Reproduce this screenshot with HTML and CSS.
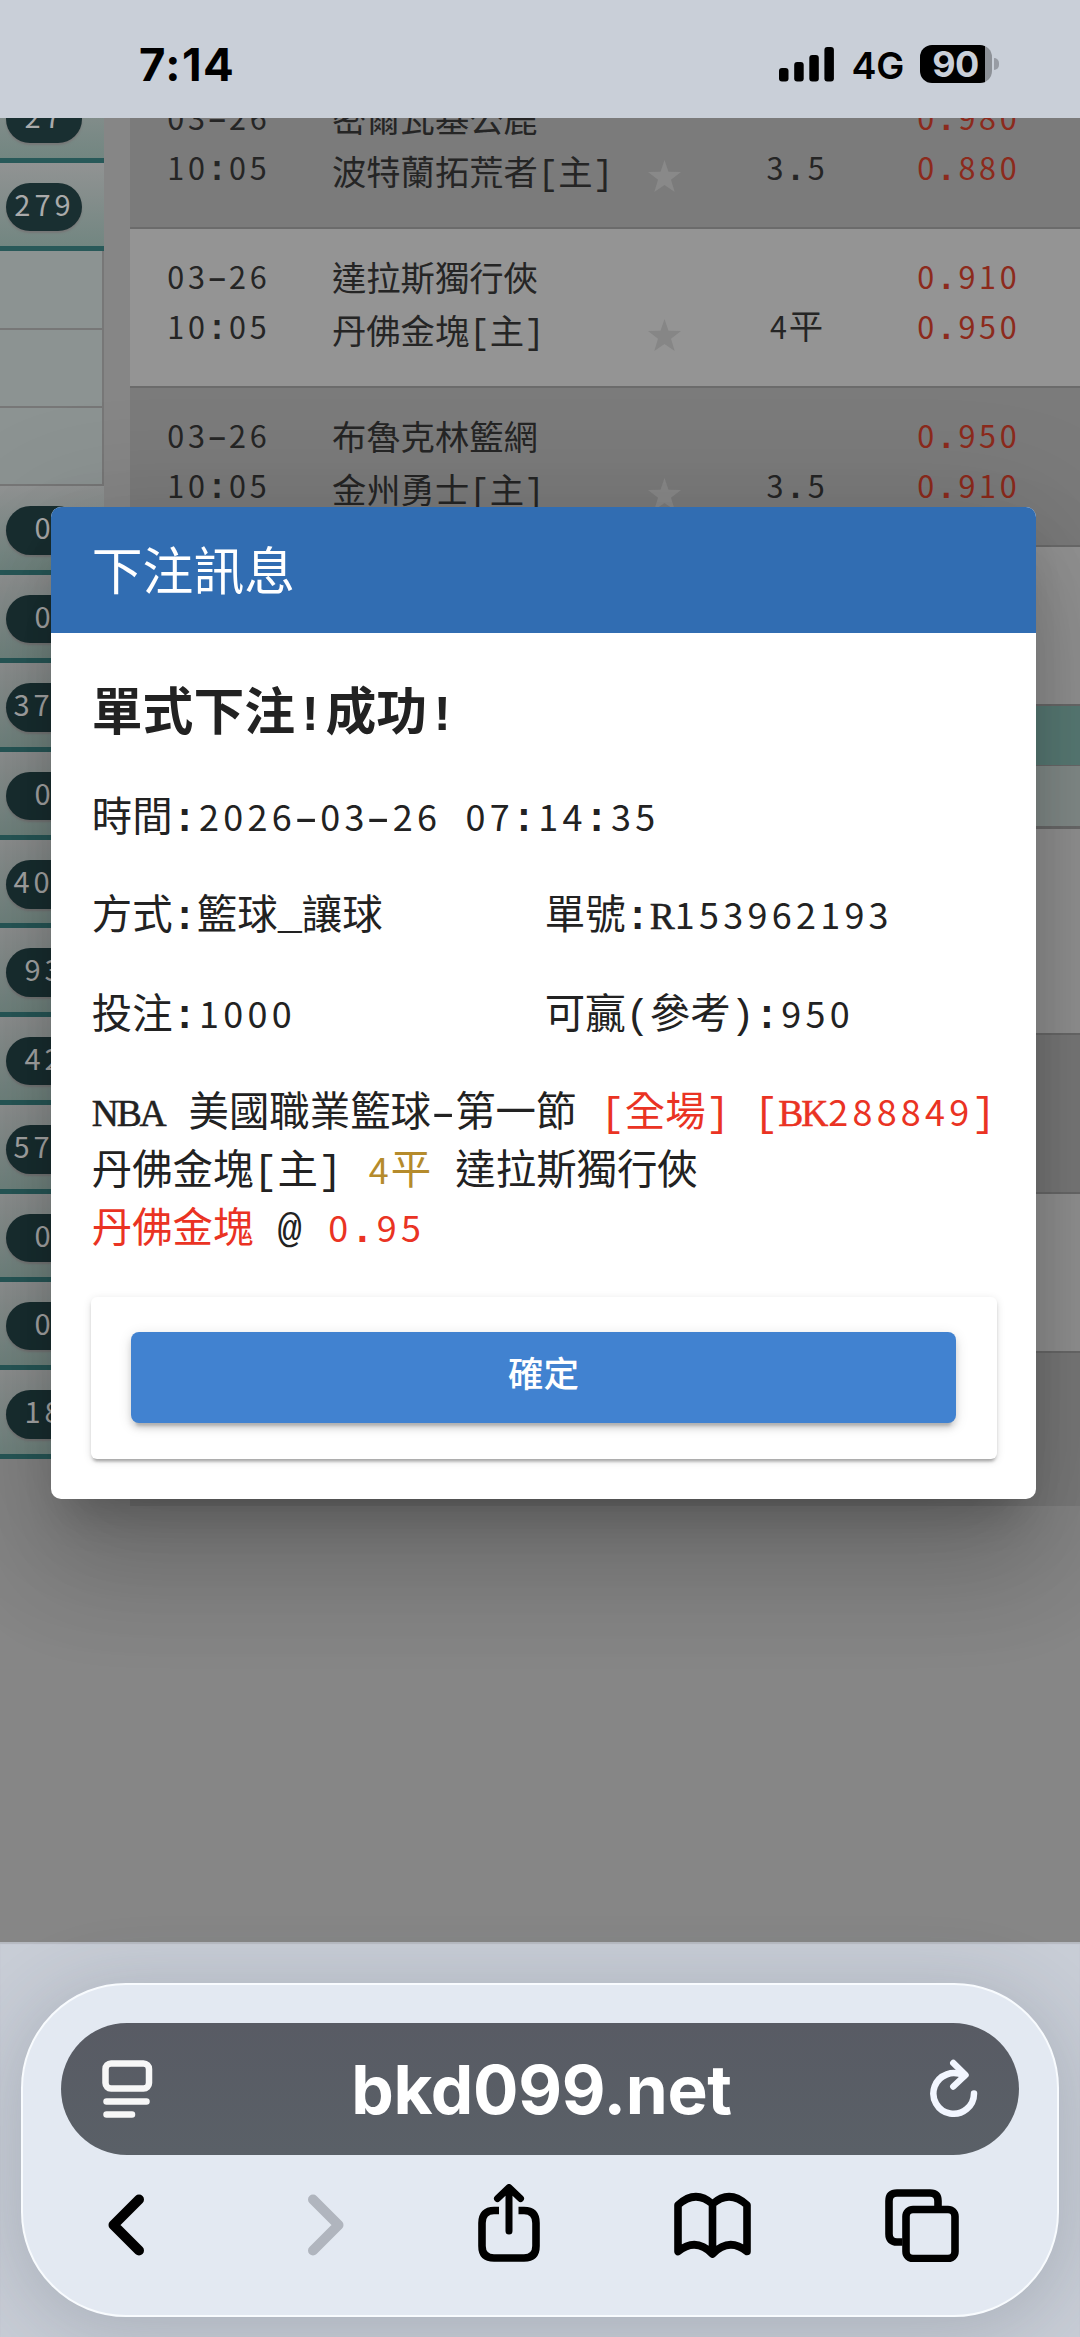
FILE: index.html
```html
<!DOCTYPE html>
<html lang="zh-Hant">
<head>
<meta charset="utf-8">
<title>下注訊息</title>
<link rel="stylesheet" href="styles.css">
</head>
<body>
<header class="status">
  <span class="clock">7:14</span>
  <svg class="signal" width="56" height="36" viewBox="0 0 56 36"><rect x="0" y="22" width="9.5" height="13.6" rx="3"/><rect x="15.2" y="16" width="9.5" height="19.6" rx="3"/><rect x="30.3" y="9" width="9.5" height="26.6" rx="3"/><rect x="45.4" y="1" width="9.5" height="34.6" rx="3"/></svg>
  <span class="network">4G</span>
  <span class="battery">90</span>
  <i class="nub"></i>
</header>

<main class="viewport">
  <div class="page">
    <nav class="side">
      <div class="cell"><span class="pill">27</span></div>
      <div class="cell"><span class="pill">279</span></div>
      <div class="sub"></div><div class="sub"></div><div class="sub"></div>
      <div class="cell"><span class="pill">0</span></div>
      <div class="cell"><span class="pill">0</span></div>
      <div class="cell"><span class="pill start">37</span></div>
      <div class="cell"><span class="pill">0</span></div>
      <div class="cell"><span class="pill start">40</span></div>
      <div class="cell"><span class="pill">93</span></div>
      <div class="cell"><span class="pill">42</span></div>
      <div class="cell"><span class="pill start">57</span></div>
      <div class="cell"><span class="pill">0</span></div>
      <div class="cell"><span class="pill">0</span></div>
      <div class="cell"><span class="pill">18</span></div>
    </nav>
    <section class="games">
      <div class="game alt">
        <div class="when"><span class="n">03</span><span class="dash">-</span><span class="n">26</span><br><span class="n">10</span><b>:</b><span class="n">05</span></div>
        <div class="teams">密爾瓦基公鹿<br>波特蘭拓荒者[主]</div>
        <svg class="star" viewBox="0 0 33 32"><path d="M16.500 0L20.500 11.800L33 12L23 19.800L26.700 32L16.500 24.900L6.300 32L10 19.800L0 12L12.500 11.800Z"/></svg>
        <div class="line"><span class="n">3</span><b>.</b><span class="n">5</span></div>
        <div class="odds"><span class="n">0</span><b>.</b><span class="n">980</span><br><span class="n">0</span><b>.</b><span class="n">880</span></div>
      </div>
      <div class="game">
        <div class="when"><span class="n">03</span><span class="dash">-</span><span class="n">26</span><br><span class="n">10</span><b>:</b><span class="n">05</span></div>
        <div class="teams">達拉斯獨行俠<br>丹佛金塊[主]</div>
        <svg class="star" viewBox="0 0 33 32"><path d="M16.500 0L20.500 11.800L33 12L23 19.800L26.700 32L16.500 24.900L6.300 32L10 19.800L0 12L12.500 11.800Z"/></svg>
        <div class="line"><span class="n">4</span>平</div>
        <div class="odds"><span class="n">0</span><b>.</b><span class="n">910</span><br><span class="n">0</span><b>.</b><span class="n">950</span></div>
      </div>
      <div class="game alt">
        <div class="when"><span class="n">03</span><span class="dash">-</span><span class="n">26</span><br><span class="n">10</span><b>:</b><span class="n">05</span></div>
        <div class="teams">布魯克林籃網<br>金州勇士[主]</div>
        <svg class="star" viewBox="0 0 33 32"><path d="M16.500 0L20.500 11.800L33 12L23 19.800L26.700 32L16.500 24.900L6.300 32L10 19.800L0 12L12.500 11.800Z"/></svg>
        <div class="line"><span class="n">3</span><b>.</b><span class="n">5</span></div>
        <div class="odds"><span class="n">0</span><b>.</b><span class="n">950</span><br><span class="n">0</span><b>.</b><span class="n">910</span></div>
      </div>
      <div class="game"></div>
      <div class="league"></div>
      <div class="columns"></div>
      <div class="game tall"></div>
      <div class="game alt"></div>
      <div class="game"></div>
      <div class="game alt last"></div>
    </section>
  </div>

  <div class="scrim">
    <article class="dialog">
      <h1>下注訊息</h1>
      <div class="content">
        <h2>單式下注!成功!</h2>
        <p>時間<b>:</b><span class="n">2026</span><span class="dash">-</span><span class="n">03</span><span class="dash">-</span><span class="n">26</span> <span class="n">07</span><b>:</b><span class="n">14</span><b>:</b><span class="n">35</span></p>
        <div class="pair"><p>方式<b>:</b>籃球_讓球</p><p>單號<b>:</b><span class="l">R</span><span class="n">153962193</span></p></div>
        <div class="pair"><p>投注<b>:</b><span class="n">1000</span></p><p>可贏(參考)<b>:</b><span class="n">950</span></p></div>
        <p><span class="l">NBA</span> 美國職業籃球<span class="dash">-</span>第一節 <span class="red">[全場] [<span class="l">BK</span><span class="n">288849</span>]</span><br>丹佛金塊[主] <span class="gold"><span class="n">4</span>平</span> 達拉斯獨行俠<br><span class="red">丹佛金塊</span> @ <span class="red"><span class="n">0</span><b>.</b><span class="n">95</span></span></p>
        <div class="card"><button>確定</button></div>
      </div>
    </article>
  </div>
</main>

<footer class="browser">
  <div class="panel">
    <div class="address">
      <svg width="52" height="60" viewBox="0 0 52 60" fill="none" stroke="#f7f7f7" stroke-width="6.500" stroke-linecap="round"><rect x="4.500" y="4.500" width="43.500" height="25" rx="5.500"/><path d="M5.500 42.500H45.500M5.500 55.500H31"/></svg>
      <span class="url">bkd099.net</span>
      <svg width="48" height="60" viewBox="0 0 48 60" fill="none" stroke="#f2f6ff" stroke-width="6.500" stroke-linecap="round" stroke-linejoin="round"><path d="M44 34.500A20.300 20.300 0 1 1 34 17"/><path d="M23.300 4L35.500 16L23.300 27.500"/></svg>
    </div>
    <div class="tools">
      <svg class="back" width="36" height="62" viewBox="0 0 36 62"><path d="M31 5.500L5.500 31L31 56.500"/></svg>
      <svg class="forward" width="36" height="62" viewBox="0 0 36 62"><path d="M5 5.500L30.500 31L5 56.500"/></svg>
      <svg width="62" height="78" viewBox="0 0 62 78"><path stroke-linecap="butt" d="M21 26.500H16Q4 26.500 4 39V62Q4 74 16 74H46Q58 74 58 62V39Q58 26.500 46 26.500H40.500"/><path stroke-width="7" d="M31 47V5M19.500 14.500L31 3.500L42.500 14.500"/></svg>
      <svg width="77" height="78" viewBox="0 0 77 78"><path d="M38.500 70Q22 53 4 67.500V21Q21.500 5 38.500 20Q55.500 5 73 21V67.500Q55 53 38.500 70V20"/></svg>
      <svg width="75" height="78" viewBox="0 0 75 78"><path stroke-linecap="butt" d="M17.500 58H12Q4 58 4 50V17Q4 9 12 9H45Q53 9 53 17V22"/><rect x="21" y="25.500" width="49" height="49" rx="7"/></svg>
    </div>
  </div>
</footer>
</body>
</html>
```
FILE: styles.css
```css
* { box-sizing: border-box; }
body {
  margin: 0;
  width: 1080px;
  height: 2337px;
  display: flex;
  flex-direction: column;
  overflow: hidden;
  background: #868686;
  font-family: "Liberation Mono", "Noto Sans CJK TC", monospace;
}
h1, h2, p { margin: 0; }

/* Phone status bar */
.status {
  height: 118px;
  flex: none;
  display: flex;
  align-items: center;
  padding: 10px 81px 0 139px;
  background: #c9cfd8;
  font-family: Inter, sans-serif;
}
.clock { font-size: 45.5px; font-weight: 700; letter-spacing: 1.4px; width: 639.500px; flex: none; }
.signal { margin-right: 17px; flex: none; }
.network { font-size: 37.500px; font-weight: 600; width: 68px; letter-spacing: -.2px; padding-top: 3px; flex: none; }
.battery {
  width: 72px;
  height: 38px;
  flex: none;
  border-radius: 12px;
  background: linear-gradient(90deg, #000 65px, #8d9197 65px);
  color: #c9cfd8;
  font-size: 36px;
  line-height: 38px;
  font-weight: 700;
  text-align: center;
  letter-spacing: -.5px;
}
.nub { width: 5px; height: 12px; margin-left: 2px; border-radius: 0 6px 6px 0; background: #989ca4; }

/* Web page under the dialog */
.viewport { position: relative; height: 1824px; flex: none; overflow: hidden; }
.page { display: flex; align-items: flex-start; font-size: 34.3px; color: #252525; }
.side { width: 104px; margin: -43.500px 25.500px 0 0; flex: none; }
.cell {
  height: 88.4px;
  border-bottom: 5px solid #285959;
  background: linear-gradient(#919393, #728681);
  padding: 20px 0 0 5.5px;
}
.pill {
  display: block;
  width: 76px;
  height: 48.500px;
  border-radius: 25px;
  background: #192f31;
  box-shadow: 0 2px 2px #777;
  color: #aaa;
  font: 29px/41px "Noto Sans CJK TC", sans-serif;
  letter-spacing: 4px;
  padding-left: 2px;
  text-align: center;
}
.pill.start { text-align: left; padding-left: 8px; }
.sub { height: 78.4px; background: #8c9392; border: solid #777; border-width: 0 2.500px 2px 0; }
.games { flex: 1; margin-top: -48.500px; }
.game {
  height: 159px;
  display: flex;
  background: #949494;
  border-bottom: 2px solid #6b6b6b;
  padding: 26px 0 0 36px;
  line-height: 50.300px;
}
.game.alt { background: #7b7b7b; }
.game.tall { height: 206px; }
.game.last { height: 153px; border: 0; }
.league { height: 59px; background: #5a7d77; }
.columns { height: 64px; background: #858e8c; border: solid #6c6c6c; border-width: 1px 0 3px; }
.when { width: 166.500px; flex: none; }
.teams { width: 316px; flex: none; line-height: 53.300px; white-space: nowrap; }
.star { width: 33px; height: 32px; flex: none; margin-top: 64.500px; fill: #898989; }
.game:not(.alt) .star { fill: #868686; }
.line { width: 229px; flex: none; padding: 50.300px 0 0; text-align: center; white-space: nowrap; margin: 0 5.500px 0 0; }

.odds { color: #8c2a1c; }

/* Digits sit on the same 0.6em grid as the rest of the monospaced text */
.n {
  font-family: "Noto Sans CJK TC", sans-serif;
  font-size: .89em;
  line-height: 0;
  letter-spacing: .119em;
  padding-left: .06em;
  margin-right: -.06em;
}
.l {
  font-family: "Liberation Serif", serif;
  font-size: .93em;
  line-height: 0;
  letter-spacing: -.06em;
  -webkit-text-stroke: .5px currentColor;
}
.dash { display: inline-block; line-height: 0; transform: scaleX(1.6); }

/* Bet receipt dialog */
.scrim { position: absolute; inset: 0; padding: 388.700px 43.800px 0 50.500px; }
.dialog {
  height: 992px;
  border-radius: 10px;
  overflow: hidden;
  background: #fff;
  color: #222;
  box-shadow: 0 30px 41px -19px rgba(0,0,0,.2), 0 66px 105px 8px rgba(0,0,0,.14), 0 25px 126px 22px rgba(0,0,0,.12);
}
.dialog h1 {
  height: 126px;
  padding: 9px 0 0 41.300px;
  background: #316db2;
  color: #fff;
  font-size: 50.8px;
  font-weight: 400;
  line-height: 122px;
}
.content { padding: 49.400px 39.700px 0 41.300px; font-size: 40.4px; line-height: 57.8px; }
.content h2 { font-size: 50.8px; line-height: 70px; margin-bottom: 39.800px; }
.content p { white-space: nowrap; }
.content > p, .pair { margin-bottom: 40.700px; }
.pair { display: grid; grid-template-columns: 453px 1fr; }
.red { color: #ea3323; }
.gold { color: #b58b2c; }
.card {
  height: 162px;
  margin: -4.300px 0 0 -1.300px;
  padding: 35px 40.500px;
  border-radius: 6px;
  box-shadow: 0 5px 3px -3px rgba(0,0,0,.2), 0 3px 3px rgba(0,0,0,.12), 0 2px 8px rgba(0,0,0,.12);
}
.card button {
  display: block;
  width: 100%;
  height: 91px;
  border: 0;
  border-radius: 8px;
  padding: 0 0 12px;
  background: #4182d0;
  color: #fff;
  font: 500 35.5px "Noto Sans CJK TC", sans-serif;
  box-shadow: 0 8px 3px -5px rgba(0,0,0,.16), 0 5px 6px rgba(0,0,0,.12), 0 3px 14px rgba(0,0,0,.12);
}

/* Browser toolbar */
.browser {
  flex: 1;
  padding: 40.500px 21px 20px;
  background: #c8cdd6;
  box-shadow: inset 0 2px 1px #b5b9c0;
}
.panel {
  height: 334px;
  border: 2px solid #f8fbfe;
  border-radius: 105px;
  background: #e3e9f2;
  padding: 38.500px 38px 0;
  box-shadow: 0 10px 75px 5px rgba(50,65,80,.2);
}
.address {
  height: 132px;
  border-radius: 66px;
  background: linear-gradient(#585b64, #5a6067);
  display: flex;
  align-items: center;
  justify-content: space-between;
  padding: 0 41px 0 40px;
}
.url { font: 700 67.500px Inter, sans-serif; color: #fff; letter-spacing: -.3px; }
.tools { display: flex; align-items: center; gap: 134px; padding: 29px 0 0 47px; }
.tools svg { fill: none; stroke: #000; stroke-width: 7.600; stroke-linejoin: round; stroke-linecap: round; flex: none; }
.tools .back { margin: 4px 30px 0 0; stroke-width: 10; }
.tools .forward { margin-top: 4px; stroke: #b0b5be; stroke-width: 10; }
```
